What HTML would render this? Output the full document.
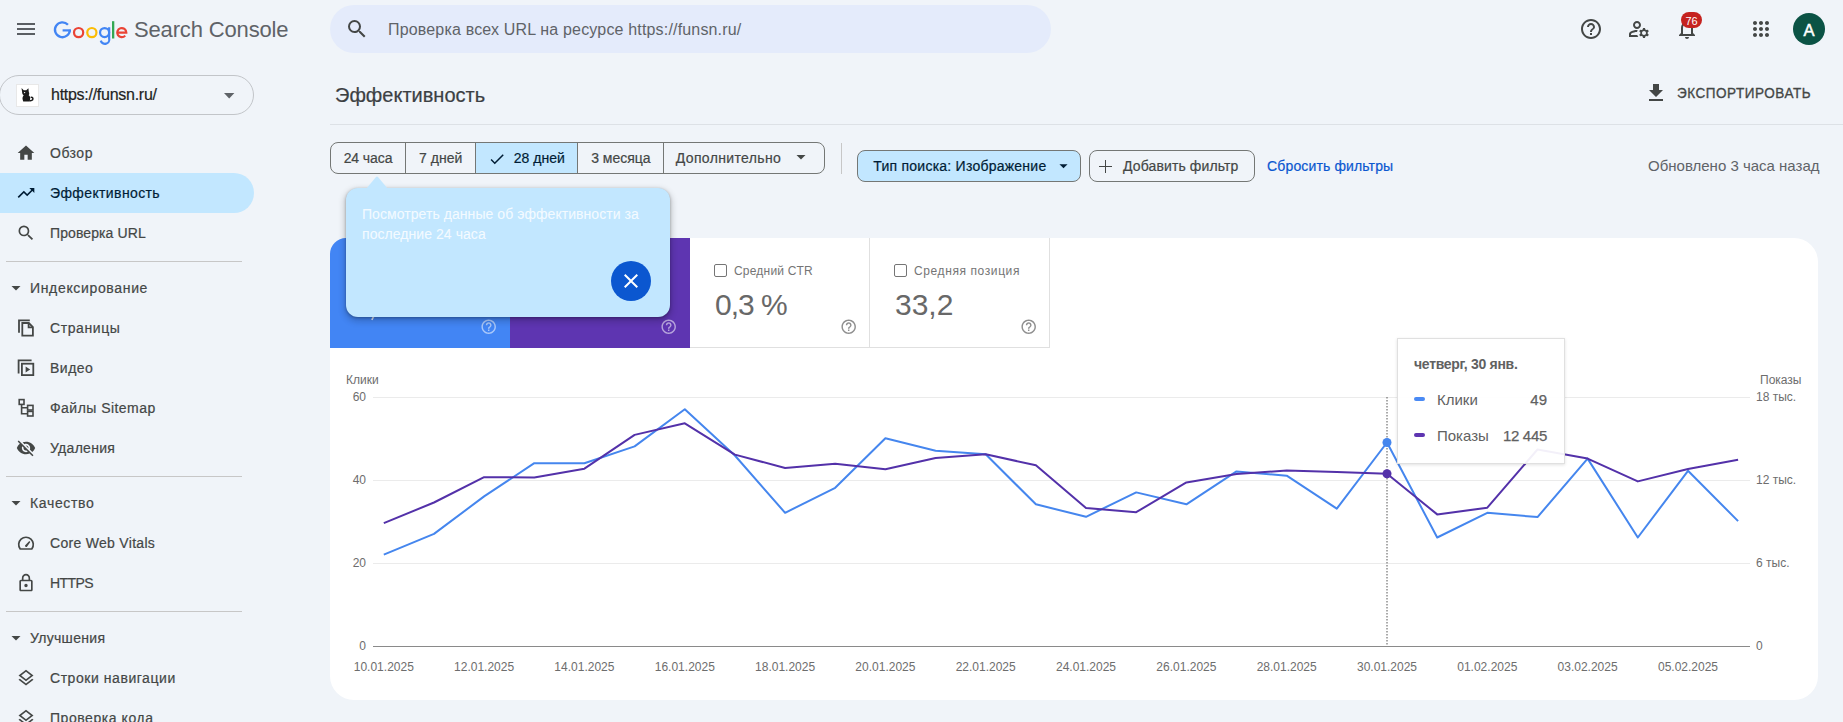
<!DOCTYPE html>
<html><head><meta charset="utf-8">
<style>
*{box-sizing:border-box;margin:0;padding:0}
html,body{width:1843px;height:722px;overflow:hidden;background:#f0f4f9;font-family:"Liberation Sans",sans-serif;color:#1f1f1f}
.a{position:absolute}
.t{position:absolute;white-space:nowrap;line-height:1}
svg{position:absolute;overflow:visible}
</style></head><body>
<div class="a" style="left:17px;top:23px;width:18px;height:2px;background:#5a5e63"></div>
<div class="a" style="left:17px;top:28px;width:18px;height:2px;background:#5a5e63"></div>
<div class="a" style="left:17px;top:33px;width:18px;height:2px;background:#5a5e63"></div>
<svg style="left:0;top:0" width="1" height="1"><path fill="none" stroke="#4285f4" stroke-width="2.3" d="M67.94 24.76A7.45 7.45 0 1 0 69.85 29.75"/><path fill="none" stroke="#4285f4" stroke-width="2.2" d="M62.6 30.4H70.9"/><circle cx="78.6" cy="32.6" r="4.6" fill="none" stroke="#ea4335" stroke-width="2.2"/><circle cx="91.85" cy="32.6" r="4.6" fill="none" stroke="#fbbc05" stroke-width="2.2"/><circle cx="104.6" cy="32.6" r="4.55" fill="none" stroke="#4285f4" stroke-width="2.2"/><path fill="none" stroke="#4285f4" stroke-width="2.2" d="M109.15 27.2V38.4A4.3 4.3 0 0 1 100.8 40.6"/><rect x="112" y="21.2" width="2.3" height="17.3" fill="#34a853"/><path fill="none" stroke="#ea4335" stroke-width="2.2" d="M117.3 32.6H126.3A4.55 4.55 0 1 0 125.18 35.64"/></svg>
<div class="t" style="left:134px;top:18.98px;font-size:22px;color:#5f6368;letter-spacing:-0.15px;font-weight:normal;">Search Console</div>
<div class="a" style="left:330px;top:5px;width:721px;height:48px;border-radius:24px;background:#e4ebfb"></div>
<svg style="left:345px;top:17px" width="24" height="24" viewBox="0 0 24 24"><path fill="#444746"  d="M15.5 14h-.79l-.28-.27A6.471 6.471 0 0 0 16 9.5 6.5 6.5 0 1 0 9.5 16c1.61 0 3.09-.59 4.23-1.57l.27.28v.79l5 4.99L20.49 19l-4.99-5zm-6 0C7.01 14 5 11.99 5 9.5S7.01 5 9.5 5 14 7.01 14 9.5 11.99 14 9.5 14z"/></svg>
<div class="t" style="left:388px;top:22.06px;font-size:16px;color:#5f6368;letter-spacing:0.17px;font-weight:normal;">Проверка всех URL на ресурсе https://funsn.ru/</div>
<svg style="left:1579px;top:17px" width="24" height="24" viewBox="0 0 24 24"><path fill="#444746"  d="M11 18h2v-2h-2v2zm1-16C6.48 2 2 6.48 2 12s4.48 10 10 10 10-4.48 10-10S17.52 2 12 2zm0 18c-4.41 0-8-3.59-8-8s3.59-8 8-8 8 3.59 8 8-3.59 8-8 8zm0-14c-2.21 0-4 1.79-4 4h2c0-1.1.9-2 2-2s2 .9 2 2c0 2-3 1.75-3 5h2c0-2.25 3-2.5 3-5 0-2.21-1.79-4-4-4z"/></svg>
<svg style="left:1627px;top:17px" width="24" height="24" viewBox="0 0 24 24"><path fill="#444746"  d="M4 18v-.65c0-.34.16-.66.41-.81C6.1 15.53 8.03 15 10 15c.03 0 .05 0 .08.01.1-.7.3-1.37.59-1.98-.22-.02-.44-.03-.67-.03-2.42 0-4.68.67-6.610 1.82-.88.52-1.39 1.5-1.39 2.53V20h9.26c-.42-.6-.75-1.28-.97-2H4zM10 12c2.21 0 4-1.79 4-4s-1.79-4-4-4-4 1.79-4 4 1.79 4 4 4zm0-6c1.1 0 2 .9 2 2s-.9 2-2 2-2-.9-2-2 .9-2 2-2zM20.75 16c0-.22-.03-.42-.06-.63l1.14-1.01-1-1.73-1.45.49c-.32-.27-.68-.48-1.08-.63L18 11h-2l-.3 1.49c-.4.15-.76.36-1.08.63l-1.45-.49-1 1.730 1.14 1.01c-.03.21-.06.41-.06.63s.03.42.06.63l-1.14 1.01 1 1.73 1.45-.49c.32.27.68.48 1.08.63L16 21h2l.3-1.49c.4-.15.76-.36 1.08-.63l1.45.49 1-1.73-1.14-1.01c.03-.21.06-.41.06-.63zM17 18c-1.1 0-2-.9-2-2s.9-2 2-2 2 .9 2 2-.9 2-2 2z"/></svg>
<svg style="left:1675px;top:17px" width="24" height="24" viewBox="0 0 24 24"><path fill="#444746"  d="M12 22c1.1 0 2-.9 2-2h-4c0 1.1.9 2 2 2zm6-6v-5c0-3.07-1.63-5.64-4.5-6.32V4c0-.83-.67-1.5-1.5-1.5s-1.5.67-1.5 1.5v.68C7.64 5.36 6 7.92 6 11v5l-2 2v1h16v-1l-2-2zm-2 1H8v-6c0-2.48 1.51-4.5 4-4.5s4 2.02 4 4.5v6z"/></svg>
<div class="a" style="left:1681px;top:12px;width:21px;height:16px;border-radius:8px;background:#c5221f"></div>
<div class="t" style="left:1681px;top:16.19px;font-size:11px;color:#fff;letter-spacing:0px;font-weight:normal;width:21px;text-align:center">76</div>
<svg style="left:1749px;top:17px" width="24" height="24" viewBox="0 0 24 24"><path fill="#444746"  d="M6 8c1.1 0 2-.9 2-2s-.9-2-2-2-2 .9-2 2 .9 2 2 2zm6 12c1.1 0 2-.9 2-2s-.9-2-2-2-2 .9-2 2 .9 2 2 2zm-6 0c1.1 0 2-.9 2-2s-.9-2-2-2-2 .9-2 2 .9 2 2 2zm0-6c1.1 0 2-.9 2-2s-.9-2-2-2-2 .9-2 2 .9 2 2 2zm6 0c1.1 0 2-.9 2-2s-.9-2-2-2-2 .9-2 2 .9 2 2 2zm4-8c0 1.1.9 2 2 2s2-.9 2-2-.9-2-2-2-2 .9-2 2zm-4 2c1.1 0 2-.9 2-2s-.9-2-2-2-2 .9-2 2 .9 2 2 2zm6 6c1.1 0 2-.9 2-2s-.9-2-2-2-2 .9-2 2 .9 2 2 2zm0 6c1.1 0 2-.9 2-2s-.9-2-2-2-2 .9-2 2 .9 2 2 2z"/></svg>
<div class="a" style="left:1793px;top:13px;width:32px;height:32px;border-radius:50%;background:#0b5345"></div>
<div class="t" style="left:1793px;top:22.03px;font-size:16.5px;color:#fff;letter-spacing:0px;font-weight:normal;width:32px;text-align:center;-webkit-text-stroke:0.5px #fff">A</div>
<div class="a" style="left:-1px;top:75px;width:255px;height:40px;border-radius:20px;border:1px solid #c2c5c9"></div>
<div class="a" style="left:16px;top:84px;width:23px;height:23px;background:#fff;border:1px solid #e8e8e8"></div>
<svg style="left:19px;top:87px" width="17" height="17" viewBox="0 0 17 17"><path fill="#1a1a1a" d="M2.5 1l2.2 2.3h2.6L9.4 1.2 9.8 5c.6 1 .6 2.3-.1 3.2 1.3 1 1.8 2.6 1.4 4.2L10.4 14.6H4.2l-.6-2.4c-.3-1.4.1-2.8 1.1-3.8C3.7 7.6 3 6.4 3.1 5z"/><path fill="none" stroke="#1a1a1a" stroke-width="1.5" d="M10.3 13.6c1.8.4 3.6-.3 3.6-1.9 0-1.3-1.3-1.8-2.2-1.1"/><circle cx="5.6" cy="5.6" r=".7" fill="#fff"/></svg>
<div class="t" style="left:51px;top:86.66px;font-size:16px;color:#1f1f1f;letter-spacing:-0.27px;font-weight:normal;-webkit-text-stroke:0.2px #1f1f1f">https://funsn.ru/</div>
<svg style="left:224px;top:93px" width="11" height="6" viewBox="0 0 11 6"><path fill="#5f6368" d="M0 0h10.4L5.2 5.4z"/></svg>
<div class="a" style="left:0px;top:173px;width:254px;height:40px;border-radius:0 20px 20px 0;background:#c2e7ff"></div>
<svg style="left:16px;top:143px" width="20" height="20" viewBox="0 0 24 24"><path fill="#444746"  d="M10 20v-6h4v6h5v-8h3L12 3 2 12h3v8z"/></svg>
<div class="t" style="left:50px;top:146.45px;font-size:14px;color:#444746;letter-spacing:0.5px;font-weight:normal;-webkit-text-stroke:0.2px #444746">Обзор</div>
<svg style="left:16px;top:183px" width="20" height="20" viewBox="0 0 24 24"><path fill="#001d35"  d="M16 6l2.29 2.29-4.88 4.88-4-4L2 16.59 3.41 18l6-6 4 4 6.3-6.29L22 12V6z"/></svg>
<div class="t" style="left:50px;top:186.45px;font-size:14px;color:#001d35;letter-spacing:0.38px;font-weight:normal;-webkit-text-stroke:0.2px #001d35">Эффективность</div>
<svg style="left:16px;top:223px" width="20" height="20" viewBox="0 0 24 24"><path fill="#444746"  d="M15.5 14h-.79l-.28-.27A6.471 6.471 0 0 0 16 9.5 6.5 6.5 0 1 0 9.5 16c1.61 0 3.09-.59 4.23-1.57l.27.28v.79l5 4.99L20.49 19l-4.99-5zm-6 0C7.01 14 5 11.99 5 9.5S7.01 5 9.5 5 14 7.01 14 9.5 11.99 14 9.5 14z"/></svg>
<div class="t" style="left:50px;top:226.45px;font-size:14px;color:#444746;letter-spacing:0.1px;font-weight:normal;-webkit-text-stroke:0.2px #444746">Проверка URL</div>
<div class="a" style="left:6px;top:261px;width:236px;height:1px;background:#c7c7c7"></div>
<svg style="left:11px;top:286px" width="10" height="5" viewBox="0 0 10 5"><path fill="#444746" d="M0.5 0h9L5 4.5z"/></svg>
<div class="t" style="left:30px;top:281.45px;font-size:14px;color:#444746;letter-spacing:0.66px;font-weight:normal;-webkit-text-stroke:0.2px #444746">Индексирование</div>
<svg style="left:16px;top:318px" width="20" height="20" viewBox="0 0 20 20"><g fill="none" stroke="#444746" stroke-width="1.8"><path d="M3 14.8V2.4H13.8"/><path d="M6.3 5H12.8L16.9 9.1V17.6H6.3Z"/><path d="M12.6 5V9.3H16.9"/></g></svg>
<div class="t" style="left:50px;top:321.45px;font-size:14px;color:#444746;letter-spacing:0.6px;font-weight:normal;-webkit-text-stroke:0.2px #444746">Страницы</div>
<svg style="left:16px;top:358px" width="20" height="20" viewBox="0 0 20 20"><g fill="none" stroke="#444746" stroke-width="1.8"><path d="M2.6 15.6V2.4H15.6"/><rect x="5.9" y="5.7" width="11.4" height="11.4"/></g><path fill="#444746" d="M9.6 8.4L14.2 11.4L9.6 14.4Z"/></svg>
<div class="t" style="left:50px;top:361.45px;font-size:14px;color:#444746;letter-spacing:0.5px;font-weight:normal;-webkit-text-stroke:0.2px #444746">Видео</div>
<svg style="left:16px;top:398px" width="20" height="20" viewBox="0 0 20 20"><g fill="none" stroke="#444746" stroke-width="1.6"><rect x="3.2" y="1.6" width="4.8" height="4.8"/><rect x="11.6" y="7.4" width="5.4" height="4.6"/><rect x="11.6" y="13.4" width="5.4" height="4.6"/><path d="M5.6 6.4V15.7H11.6M5.6 9.7H11.6"/></g></svg>
<div class="t" style="left:50px;top:401.45px;font-size:14px;color:#444746;letter-spacing:0.46px;font-weight:normal;-webkit-text-stroke:0.2px #444746">Файлы Sitemap</div>
<svg style="left:16px;top:438px" width="20" height="20" viewBox="0 0 24 24"><path fill="#444746"  d="M12 7c2.76 0 5 2.24 5 5 0 .65-.13 1.26-.36 1.83l2.92 2.92c1.51-1.26 2.7-2.89 3.43-4.75-1.73-4.39-6-7.5-11-7.5-1.4 0-2.74.25-3.98.7l2.16 2.16C10.74 7.13 11.35 7 12 7zM2 4.27l2.28 2.28.46.46C3.08 8.3 1.78 10.02 1 12c1.73 4.39 6 7.5 11 7.5 1.55 0 3.03-.3 4.38-.84l.42.42L19.73 22 21 20.73 3.27 3 2 4.27zM7.53 9.8l1.55 1.55c-.05.21-.08.43-.08.65 0 1.66 1.34 3 3 3 .22 0 .44-.03.65-.08l1.55 1.55c-.67.33-1.41.53-2.2.53-2.76 0-5-2.24-5-5 0-.79.2-1.53.53-2.2zm4.31-.78l3.15 3.15.02-.16c0-1.66-1.34-3-3-3l-.17.01z"/></svg>
<div class="t" style="left:50px;top:441.45px;font-size:14px;color:#444746;letter-spacing:0.3px;font-weight:normal;-webkit-text-stroke:0.2px #444746">Удаления</div>
<div class="a" style="left:6px;top:476px;width:236px;height:1px;background:#c7c7c7"></div>
<svg style="left:11px;top:501px" width="10" height="5" viewBox="0 0 10 5"><path fill="#444746" d="M0.5 0h9L5 4.5z"/></svg>
<div class="t" style="left:30px;top:496.45px;font-size:14px;color:#444746;letter-spacing:0.65px;font-weight:normal;-webkit-text-stroke:0.2px #444746">Качество</div>
<svg style="left:16px;top:533px" width="20" height="20" viewBox="0 0 20 20"><path fill="none" stroke="#444746" stroke-width="1.7" d="M4.2 16A7.3 7.3 0 1 1 15.8 16Z"/><path fill="#444746" d="M9 12.6l4.3-4.6 1 .9-3.5 5a1.3 1.3 0 0 1-1.8-1.3z"/></svg>
<div class="t" style="left:50px;top:536.45px;font-size:14px;color:#444746;letter-spacing:0.3px;font-weight:normal;-webkit-text-stroke:0.2px #444746">Core Web Vitals</div>
<svg style="left:16px;top:573px" width="20" height="20" viewBox="0 0 24 24"><path fill="#444746"  d="M18 8h-1V6c0-2.76-2.24-5-5-5S7 3.24 7 6v2H6c-1.1 0-2 .9-2 2v10c0 1.1.9 2 2 2h12c1.1 0 2-.9 2-2V10c0-1.1-.9-2-2-2zM9 6c0-1.66 1.34-3 3-3s3 1.34 3 3v2H9V6zm9 14H6V10h12v10zm-6-3c1.1 0 2-.9 2-2s-.9-2-2-2-2 .9-2 2 .9 2 2 2z"/></svg>
<div class="t" style="left:50px;top:576.45px;font-size:14px;color:#444746;letter-spacing:-0.6px;font-weight:normal;-webkit-text-stroke:0.2px #444746">HTTPS</div>
<div class="a" style="left:6px;top:611px;width:236px;height:1px;background:#c7c7c7"></div>
<svg style="left:11px;top:636px" width="10" height="5" viewBox="0 0 10 5"><path fill="#444746" d="M0.5 0h9L5 4.5z"/></svg>
<div class="t" style="left:30px;top:631.45px;font-size:14px;color:#444746;letter-spacing:0.3px;font-weight:normal;-webkit-text-stroke:0.2px #444746">Улучшения</div>
<svg style="left:16px;top:668px" width="20" height="20" viewBox="0 0 24 24"><path fill="#444746"  d="M11.99 18.54l-7.37-5.73L3 14.07l9 7 9-7-1.63-1.27-7.38 5.74zM12 16l7.36-5.73L21 9l-9-7-9 7 1.63 1.27L12 16zm0-11.47L17.74 9 12 13.47 6.26 9 12 4.53z"/></svg>
<div class="t" style="left:50px;top:671.45px;font-size:14px;color:#444746;letter-spacing:0.55px;font-weight:normal;-webkit-text-stroke:0.2px #444746">Строки навигации</div>
<svg style="left:16px;top:708px" width="20" height="20" viewBox="0 0 24 24"><path fill="#444746"  d="M11.99 18.54l-7.37-5.73L3 14.07l9 7 9-7-1.63-1.27-7.38 5.74zM12 16l7.36-5.73L21 9l-9-7-9 7 1.63 1.27L12 16zm0-11.47L17.74 9 12 13.47 6.26 9 12 4.53z"/></svg>
<div class="t" style="left:50px;top:711.45px;font-size:14px;color:#444746;letter-spacing:0.55px;font-weight:normal;-webkit-text-stroke:0.2px #444746">Проверка кода</div>
<div class="t" style="left:335px;top:84.67px;font-size:20px;color:#3c4043;letter-spacing:0px;font-weight:normal;-webkit-text-stroke:0.2px #3c4043">Эффективность</div>
<svg style="left:1644px;top:81px" width="24" height="24" viewBox="0 0 24 24"><path fill="#444746"  d="M19 9h-4V3H9v6H5l7 7 7-7zM5 18v2h14v-2H5z"/></svg>
<div class="t" style="left:1677px;top:85.40px;font-size:15px;color:#444746;letter-spacing:0.6px;font-weight:normal;-webkit-text-stroke:0.35px #444746;transform:scaleX(0.9);transform-origin:0 0">ЭКСПОРТИРОВАТЬ</div>
<div class="a" style="left:330px;top:124px;width:1513px;height:1px;background:#dde1e6"></div>
<div class="a" style="left:330px;top:142px;width:495px;height:32px;border:1px solid #747775;border-radius:8px;overflow:hidden">
<div class="a" style="left:144px;top:0;width:103px;height:30px;background:#c2e7ff"></div>
<div class="a" style="left:74px;top:0;width:1px;height:30px;background:#747775"></div>
<div class="a" style="left:144px;top:0;width:1px;height:30px;background:#747775"></div>
<div class="a" style="left:246px;top:0;width:1px;height:30px;background:#747775"></div>
<div class="a" style="left:332px;top:0;width:1px;height:30px;background:#747775"></div>
</div>
<div class="t" style="left:343.7px;top:151.15px;font-size:14px;color:#444746;letter-spacing:-0.1px;font-weight:normal;-webkit-text-stroke:0.2px #444746">24 часа</div>
<div class="t" style="left:419.1px;top:151.15px;font-size:14px;color:#444746;letter-spacing:0px;font-weight:normal;-webkit-text-stroke:0.2px #444746">7 дней</div>
<svg style="left:487.6px;top:150px" width="18" height="18" viewBox="0 0 24 24"><path fill="#001d35"  d="M9 16.17L4.83 12l-1.42 1.41L9 19 21 7l-1.41-1.41z"/></svg>
<div class="t" style="left:513.8px;top:151.15px;font-size:14px;color:#001d35;letter-spacing:0px;font-weight:normal;-webkit-text-stroke:0.2px #001d35">28 дней</div>
<div class="t" style="left:591.2px;top:151.15px;font-size:14px;color:#444746;letter-spacing:0px;font-weight:normal;-webkit-text-stroke:0.2px #444746">3 месяца</div>
<div class="t" style="left:675.8px;top:151.15px;font-size:14px;color:#444746;letter-spacing:0.35px;font-weight:normal;-webkit-text-stroke:0.2px #444746">Дополнительно</div>
<svg style="left:796px;top:155px" width="10" height="5" viewBox="0 0 10 5"><path fill="#444746" d="M0.5 0h9L5 4.5z"/></svg>
<div class="a" style="left:841px;top:143px;width:1px;height:31px;background:#c7c7c7"></div>
<div class="a" style="left:857px;top:150px;width:224px;height:32px;border:1px solid #747775;border-radius:8px;background:#c2e7ff"></div>
<div class="t" style="left:873.3px;top:158.65px;font-size:14px;color:#001d35;letter-spacing:0.24px;font-weight:normal;-webkit-text-stroke:0.2px #001d35">Тип поиска: Изображение</div>
<svg style="left:1059px;top:164px" width="9" height="5" viewBox="0 0 10 5"><path fill="#001d35" d="M0.5 0h9L5 4.5z"/></svg>
<div class="a" style="left:1089px;top:150px;width:166px;height:32px;border:1px solid #747775;border-radius:8px"></div>
<div class="a" style="left:1099.3px;top:165.5px;width:12.6px;height:1.6px;background:#444746"></div>
<div class="a" style="left:1104.8px;top:160px;width:1.6px;height:12.6px;background:#444746"></div>
<div class="t" style="left:1123px;top:159.45px;font-size:14px;color:#444746;letter-spacing:0.12px;font-weight:normal;-webkit-text-stroke:0.2px #444746">Добавить фильтр</div>
<div class="t" style="left:1267.1px;top:159.45px;font-size:14px;color:#0b57d0;letter-spacing:0.13px;font-weight:normal;-webkit-text-stroke:0.2px #0b57d0">Сбросить фильтры</div>
<div class="t" style="left:1648px;top:157.90px;font-size:15px;color:#5f6368;letter-spacing:0px;font-weight:normal;">Обновлено 3 часа назад</div>
<div class="a" style="left:330px;top:238px;width:1488px;height:462px;border-radius:24px;background:#fff"></div>
<div class="a" style="left:330px;top:238px;width:180px;height:110px;border-radius:16px 0 0 0;background:#4285f4"></div>
<div class="a" style="left:510px;top:238px;width:180px;height:110px;background:#5e35b1"></div>
<div class="a" style="left:690px;top:238px;width:180px;height:110px;border-right:1px solid #e0e0e0;border-bottom:1px solid #e0e0e0"></div>
<div class="a" style="left:870px;top:238px;width:180px;height:110px;border-right:1px solid #e0e0e0;border-bottom:1px solid #e0e0e0"></div>
<svg style="left:480px;top:318px" width="17.4" height="17.4" viewBox="0 0 24 24"><path fill="rgba(255,255,255,0.55)"  d="M11 18h2v-2h-2v2zm1-16C6.48 2 2 6.48 2 12s4.48 10 10 10 10-4.48 10-10S17.52 2 12 2zm0 18c-4.41 0-8-3.59-8-8s3.59-8 8-8 8 3.59 8 8-3.59 8-8 8zm0-14c-2.21 0-4 1.79-4 4h2c0-1.1.9-2 2-2s2 .9 2 2c0 2-3 1.75-3 5h2c0-2.25 3-2.5 3-5 0-2.21-1.79-4-4-4z"/></svg>
<svg style="left:0;top:0" width="10" height="10"><path d="M373.6 316.5L371.8 319.8" stroke="#fff" stroke-width="1.6" opacity="0.85"/></svg>
<svg style="left:660px;top:318px" width="17.4" height="17.4" viewBox="0 0 24 24"><path fill="rgba(255,255,255,0.55)"  d="M11 18h2v-2h-2v2zm1-16C6.48 2 2 6.48 2 12s4.48 10 10 10 10-4.48 10-10S17.52 2 12 2zm0 18c-4.41 0-8-3.59-8-8s3.59-8 8-8 8 3.59 8 8-3.59 8-8 8zm0-14c-2.21 0-4 1.79-4 4h2c0-1.1.9-2 2-2s2 .9 2 2c0 2-3 1.75-3 5h2c0-2.25 3-2.5 3-5 0-2.21-1.79-4-4-4z"/></svg>
<div class="a" style="left:714px;top:264px;width:12.5px;height:12.5px;border:1.5px solid #757575;border-radius:2px"></div>
<div class="t" style="left:734px;top:264.74px;font-size:12px;color:#757575;letter-spacing:0.2px;font-weight:normal;">Средний CTR</div>
<div class="t" style="left:715px;top:290.41px;font-size:30px;color:#686868;letter-spacing:-1.0px;font-weight:normal;">0,3 %</div>
<svg style="left:840px;top:318px" width="17.4" height="17.4" viewBox="0 0 24 24"><path fill="#8f8f8f"  d="M11 18h2v-2h-2v2zm1-16C6.48 2 2 6.48 2 12s4.48 10 10 10 10-4.48 10-10S17.52 2 12 2zm0 18c-4.41 0-8-3.59-8-8s3.59-8 8-8 8 3.59 8 8-3.59 8-8 8zm0-14c-2.21 0-4 1.79-4 4h2c0-1.1.9-2 2-2s2 .9 2 2c0 2-3 1.75-3 5h2c0-2.25 3-2.5 3-5 0-2.21-1.79-4-4-4z"/></svg>
<div class="a" style="left:894px;top:264px;width:12.5px;height:12.5px;border:1.5px solid #757575;border-radius:2px"></div>
<div class="t" style="left:914px;top:264.74px;font-size:12px;color:#757575;letter-spacing:0.6px;font-weight:normal;">Средняя позиция</div>
<div class="t" style="left:895px;top:290.41px;font-size:30px;color:#686868;letter-spacing:0px;font-weight:normal;">33,2</div>
<svg style="left:1020px;top:318px" width="17.4" height="17.4" viewBox="0 0 24 24"><path fill="#8f8f8f"  d="M11 18h2v-2h-2v2zm1-16C6.48 2 2 6.48 2 12s4.48 10 10 10 10-4.48 10-10S17.52 2 12 2zm0 18c-4.41 0-8-3.59-8-8s3.59-8 8-8 8 3.59 8 8-3.59 8-8 8zm0-14c-2.21 0-4 1.79-4 4h2c0-1.1.9-2 2-2s2 .9 2 2c0 2-3 1.75-3 5h2c0-2.25 3-2.5 3-5 0-2.21-1.79-4-4-4z"/></svg>
<svg style="left:0;top:0" width="1843" height="722" viewBox="0 0 1843 722">
<line x1="373" y1="397.5" x2="1750" y2="397.5" stroke="#ebebeb" stroke-width="1"/>
<line x1="373" y1="480.5" x2="1750" y2="480.5" stroke="#ebebeb" stroke-width="1"/>
<line x1="373" y1="563.5" x2="1750" y2="563.5" stroke="#ebebeb" stroke-width="1"/>
<line x1="373" y1="646.5" x2="1750" y2="646.5" stroke="#8a8a8a" stroke-width="1"/>
<g font-family="Liberation Sans" font-size="12" fill="#6d6d6d">
<text x="346" y="384">Клики</text>
<text x="366" y="401" text-anchor="end">60</text>
<text x="366" y="484" text-anchor="end">40</text>
<text x="366" y="567" text-anchor="end">20</text>
<text x="366" y="650" text-anchor="end">0</text>
<text x="1760" y="384">Показы</text>
<text x="1756" y="401">18 тыс.</text>
<text x="1756" y="484">12 тыс.</text>
<text x="1756" y="567">6 тыс.</text>
<text x="1756" y="650">0</text>
<text x="383.8" y="671" text-anchor="middle">10.01.2025</text>
<text x="484.1" y="671" text-anchor="middle">12.01.2025</text>
<text x="584.4" y="671" text-anchor="middle">14.01.2025</text>
<text x="684.8" y="671" text-anchor="middle">16.01.2025</text>
<text x="785.1" y="671" text-anchor="middle">18.01.2025</text>
<text x="885.4" y="671" text-anchor="middle">20.01.2025</text>
<text x="985.7" y="671" text-anchor="middle">22.01.2025</text>
<text x="1086.0" y="671" text-anchor="middle">24.01.2025</text>
<text x="1186.4" y="671" text-anchor="middle">26.01.2025</text>
<text x="1286.7" y="671" text-anchor="middle">28.01.2025</text>
<text x="1387.0" y="671" text-anchor="middle">30.01.2025</text>
<text x="1487.3" y="671" text-anchor="middle">01.02.2025</text>
<text x="1587.6" y="671" text-anchor="middle">03.02.2025</text>
<text x="1688.0" y="671" text-anchor="middle">05.02.2025</text>
</g>
<line x1="1387" y1="397" x2="1387" y2="646" stroke="#555" stroke-width="1" stroke-dasharray="1.5,1.5"/>
<polyline fill="none" stroke="#4586ee" stroke-width="2" stroke-linejoin="round" points="383.8,554.6 434.0,533.9 484.1,496.4 534.3,463.2 584.4,463.2 634.6,446.4 684.8,409.3 734.9,455.5 785.1,512.8 835.2,487.8 885.4,438.2 935.6,450.7 985.7,454.3 1035.9,504.3 1086.0,516.8 1136.2,492.4 1186.4,504.3 1236.5,471.4 1286.7,475.7 1336.8,508.6 1387.0,442.5 1437.2,537.5 1487.3,512.8 1537.5,517.1 1587.6,458.6 1637.8,537.5 1688.0,470.8 1738.1,521.1"/>
<polyline fill="none" stroke="#5331a9" stroke-width="2" stroke-linejoin="round" points="383.8,523.2 434.0,502.5 484.1,477.2 534.3,477.5 584.4,468.7 634.6,434.9 684.8,423.3 734.9,454.6 785.1,468.0 835.2,463.8 885.4,469.3 935.6,458.0 985.7,454.3 1035.9,465.3 1086.0,508.0 1136.2,512.2 1186.4,482.4 1236.5,474.1 1286.7,470.5 1336.8,472.0 1387.0,473.8 1437.2,514.4 1487.3,507.7 1537.5,449.5 1587.6,458.6 1637.8,481.4 1688.0,469.0 1738.1,459.8"/>
<circle cx="1387" cy="442.5" r="4.5" fill="#4586ee"/>
<circle cx="1387" cy="473.8" r="4.5" fill="#5331a9"/>
</svg>
<div class="a" style="left:1397px;top:338px;width:168px;height:126px;background:rgba(255,255,255,0.93);border:1px solid #e0e0e0;box-shadow:0 1px 3px rgba(0,0,0,0.12)"></div>
<div class="t" style="left:1414px;top:357.15px;font-size:14px;color:#616161;letter-spacing:-0.3px;font-weight:bold;">четверг, 30 янв.</div>
<div class="a" style="left:1414px;top:397px;width:11px;height:4px;border-radius:2px;background:#4a8af4"></div>
<div class="t" style="left:1437px;top:392.30px;font-size:15px;color:#616161;letter-spacing:0px;font-weight:normal;">Клики</div>
<div class="t" style="right:296px;top:392.30px;font-size:15px;color:#616161;letter-spacing:0px;font-weight:normal;-webkit-text-stroke:0.25px #616161">49</div>
<div class="a" style="left:1414px;top:433px;width:11px;height:4px;border-radius:2px;background:#5e35b1"></div>
<div class="t" style="left:1437px;top:428.30px;font-size:15px;color:#616161;letter-spacing:0px;font-weight:normal;">Показы</div>
<div class="t" style="right:296px;top:428.30px;font-size:15px;color:#616161;letter-spacing:-0.3px;font-weight:normal;-webkit-text-stroke:0.25px #616161">12 445</div>
<div class="a" style="left:346px;top:188px;width:324px;height:129px;border-radius:12px;background:#c2e7ff;box-shadow:0 3px 6px 2px rgba(0,0,0,0.17),0 1px 3px rgba(0,0,0,0.3)"></div>
<svg style="left:362px;top:175px" width="30" height="15" viewBox="0 0 30 15"><path fill="#c2e7ff" d="M4 14L14 2Q15 1 16 2L26 14z"/></svg>
<div class="t" style="left:362px;top:204px;font-size:14px;line-height:20px;color:rgba(255,255,255,0.82);white-space:normal;width:300px;letter-spacing:0.06px;-webkit-text-stroke:0.15px rgba(255,255,255,0.6)">Посмотреть данные об эффективности за последние 24 часа</div>
<div class="a" style="left:611px;top:261px;width:40px;height:40px;border-radius:50%;background:#0b57d0"></div>
<svg style="left:619px;top:269px" width="24" height="24" viewBox="0 0 24 24"><path fill="#fff"  d="M19 6.41L17.59 5 12 10.59 6.41 5 5 6.41 10.59 12 5 17.59 6.41 19 12 13.41 17.59 19 19 17.59 13.41 12z"/></svg>

</body></html>
